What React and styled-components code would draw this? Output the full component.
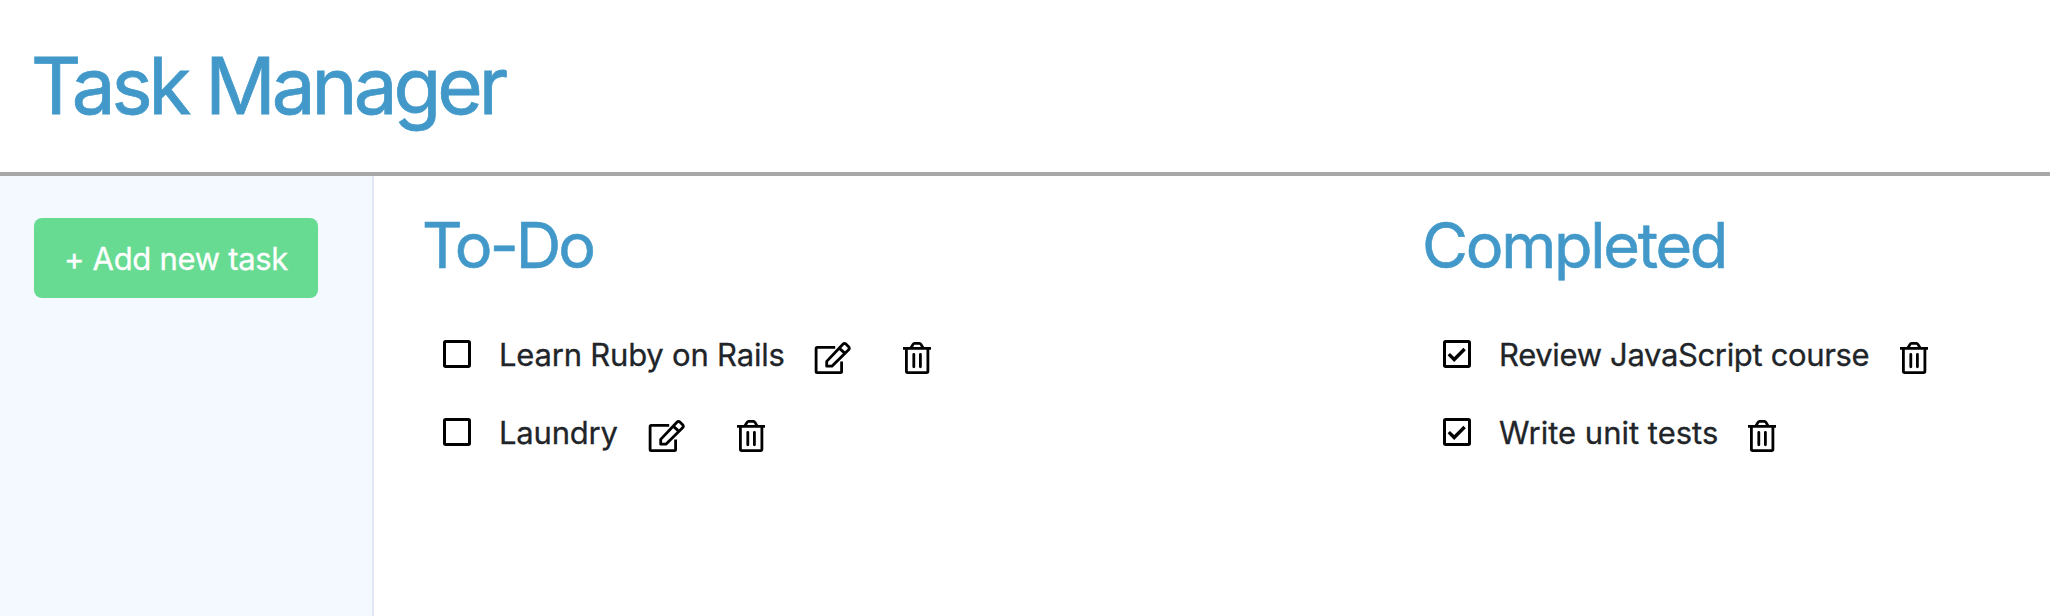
import React from "react";
import styled, { createGlobalStyle } from "styled-components";

const GlobalStyle = createGlobalStyle`
  *, *::before, *::after { box-sizing: border-box; }
  body {
    margin: 0;
    background: #fff;
    color: #212529;
    font-family: Inter, "Liberation Sans", sans-serif;
  }
  h1, h2, ul { margin: 0; padding: 0; font-weight: 400; }
`;

const Page = styled.div`
  display: flex;
  flex-direction: column;
  height: 616px;
  overflow: hidden;
`;

const Header = styled.header`
  height: 176px;
  padding: 36px 31px 0;
  border-bottom: 4px solid #a8a8a8;
`;

const Title = styled.h1`
  color: #4299c9;
  font-size: 78px;
  line-height: 100px;
  letter-spacing: -4px;
  -webkit-text-stroke: 0.8px currentColor;
  white-space: nowrap;
`;

const Body = styled.div`
  display: flex;
  flex: 1;
`;

const Sidebar = styled.aside`
  width: 374px;
  padding: 42px 0 0 34px;
  background: #f4f8ff;
  border-right: 2px solid #e3e6f5;
`;

const AddButton = styled.button`
  width: 284px;
  height: 80px;
  padding: 0;
  border: 0;
  border-radius: 8px;
  background: #68db93;
  color: #fff;
  font-family: inherit;
  font-size: 31px;
  letter-spacing: -0.3px;
  -webkit-text-stroke: 0.3px currentColor;
  white-space: nowrap;
`;

const Board = styled.main`
  display: grid;
  grid-template-columns: 1000px 1fr;
  flex: 1;
  padding: 31px 0 0 48px;
`;

const Column = styled.section`
  min-width: 0;
`;

const ColumnTitle = styled.h2`
  color: #4299c9;
  font-size: 63px;
  line-height: 76px;
  letter-spacing: ${(p) => p.$tracking}px;
  -webkit-text-stroke: 0.6px currentColor;
`;

const TaskList = styled.ul`
  list-style: none;
  padding: 32px 0 0 21px;
`;

const Task = styled.li`
  display: flex;
  align-items: center;
  height: 78px;
`;

const TaskName = styled.span`
  width: ${(p) => p.$width}px;
  margin-left: 28px;
  padding-top: 1px;
  font-size: 31px;
  line-height: 40px;
  letter-spacing: ${(p) => p.$tracking}px;
  -webkit-text-stroke: 0.3px currentColor;
  white-space: nowrap;
`;

const Icon = styled.svg`
  flex: none;
  overflow: visible;
  fill: none;
  stroke: #000;
  stroke-width: 2.8;
  stroke-linejoin: round;
`;

const EditIcon = styled(Icon)`
  margin: 8px 52px 0 0;
`;

const TrashIcon = styled(Icon)`
  margin-top: 8px;
`;

function Checkbox({ checked }) {
  return (
    <Icon width="28" height="28" viewBox="0 0 28 28">
      <rect x="1.5" y="1.5" width="25" height="25" rx="1.2" strokeWidth="3" />
      {checked && <path d="M5.8 14.1L11.2 19.5L21.6 9" strokeWidth="3.4" strokeLinejoin="miter" />}
    </Icon>
  );
}

function Edit() {
  return (
    <EditIcon width="37" height="32" viewBox="0 0 37 32">
      <path d="M21.2 5.4H3.2Q2.1 5.4 2.1 6.5V29.5Q2.1 30.6 3.2 30.6H26.5Q27.6 30.6 27.6 29.5V19.6" />
      <path d="M12.7 24.2V19.4L28.9 2.2Q30.4 .7 31.9 2.1L34.6 4.7Q36 6.2 34.6 7.7L17.9 24.2ZM25.2 6.1L31 11.4" />
    </EditIcon>
  );
}

function Trash() {
  return (
    <TrashIcon width="28" height="32" viewBox="0 0 28 32">
      <path d="M0 6.4H28M7.9 6L10 2.4Q10.6 1.4 11.6 1.4H16.4Q17.4 1.4 18 2.4L20.1 6" />
      <path d="M3.4 6.4V29.3Q3.4 30.6 4.7 30.6H23.6Q24.9 30.6 24.9 29.3V6.4" />
      <path d="M10.8 12.3V24.8M17.4 12.3V24.8" strokeLinecap="round" />
    </TrashIcon>
  );
}

const columns = [
  {
    title: "To-Do",
    tracking: -2.9,
    tasks: [
      { name: "Learn Ruby on Rails", width: 315, tracking: -0.2 },
      { name: "Laundry", width: 148.5, tracking: -0.2 },
    ],
  },
  {
    title: "Completed",
    tracking: -2.3,
    done: true,
    tasks: [
      { name: "Review JavaScript course", width: 400.5, tracking: -0.35 },
      { name: "Write unit tests", width: 249, tracking: 0 },
    ],
  },
];

export default function App() {
  return (
    <Page>
      <GlobalStyle />
      <Header>
        <Title>Task Manager</Title>
      </Header>
      <Body>
        <Sidebar>
          <AddButton>+ Add new task</AddButton>
        </Sidebar>
        <Board>
          {columns.map((column) => (
            <Column key={column.title}>
              <ColumnTitle $tracking={column.tracking}>{column.title}</ColumnTitle>
              <TaskList>
                {column.tasks.map((task) => (
                  <Task key={task.name}>
                    <Checkbox checked={column.done} />
                    <TaskName $width={task.width} $tracking={task.tracking}>
                      {task.name}
                    </TaskName>
                    {!column.done && <Edit />}
                    <Trash />
                  </Task>
                ))}
              </TaskList>
            </Column>
          ))}
        </Board>
      </Body>
    </Page>
  );
}
